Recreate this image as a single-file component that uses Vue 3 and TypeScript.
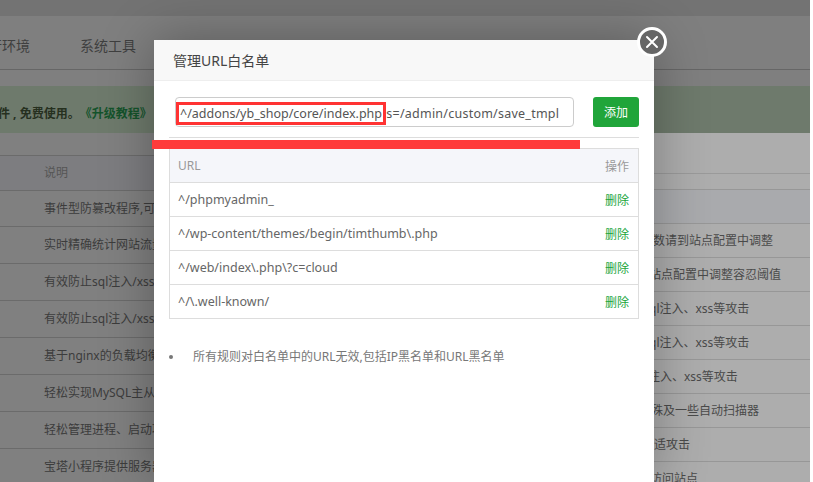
<script setup lang="ts">
const leftRows: string[] = [
  '事件型防篡改程序,可有效保护网站不被篡改',
  '实时精确统计网站流量、来源和访问情况',
  '有效防止sql注入/xss/一句话木马等常见攻击',
  '有效防止sql注入/xss/一句话木马等常见攻击',
  '基于nginx的负载均衡插件,支持多节点',
  '轻松实现MySQL主从同步备份的工具',
  '轻松管理进程、启动项和系统服务',
  '宝塔小程序提供服务器管理的便捷入口',
]
const rightRows: { text: string; inset: number }[] = [
  { text: '数请到站点配置中调整', inset: 153 },
  { text: '站点配置中调整容忍阈值', inset: 149 },
  { text: 'ql注入、xss等攻击', inset: 149 },
  { text: 'ql注入、xss等攻击', inset: 149 },
  { text: '注入、xss等攻击', inset: 148 },
  { text: '殊及一些自动扫描器', inset: 151 },
  { text: '适攻击', inset: 154 },
  { text: '访问站点', inset: 150 },
]
const urls: string[] = [
  '^/phpmyadmin_',
  '^/wp-content/themes/begin/timthumb\\.php',
  '^/web/index\\.php\\?c=cloud',
  '^/\\.well-known/',
]
</script>

<template>
  <div class="page">
    <div class="topstrip"></div>
    <nav class="nav">
      <span class="nav-first">运行环境</span>
      <span>系统工具</span>
    </nav>
    <div class="banner">
      <span class="banner-text">件 , 免费使用。</span><span class="banner-link">《升级教程》</span>
    </div>
    <div class="body">
      <section class="left">
        <div class="left-head">说明</div>
        <div v-for="(row, i) in leftRows" :key="i" class="left-row">{{ row }}</div>
      </section>
      <section class="right">
        <div class="right-gap"></div>
        <div class="right-gap2"></div>
        <div class="right-head"></div>
        <div
          v-for="(row, i) in rightRows"
          :key="i"
          class="right-row"
          :style="{ paddingLeft: row.inset + 'px' }"
        >{{ row.text }}</div>
      </section>
    </div>

    <div class="modal">
      <header class="modal-title">管理URL白名单</header>
      <div class="modal-body">
        <div class="form">
          <div class="url-input">^/addons/yb_shop/core/index.php <span class="url-rest">s=/admin/custom/save_tmpl</span></div>
          <button class="add">添加</button>
        </div>
        <div class="divider"></div>
        <table class="rules">
          <thead>
            <tr><th>URL</th><th class="op">操作</th></tr>
          </thead>
          <tbody>
            <tr v-for="u in urls" :key="u">
              <td>{{ u }}</td>
              <td class="op"><a class="del">删除</a></td>
            </tr>
          </tbody>
        </table>
        <ul class="notes">
          <li>所有规则对白名单中的URL无效,包括IP黑名单和URL黑名单</li>
        </ul>
      </div>
    </div>

    <button class="close" aria-label="关闭">
      <svg width="14" height="14" viewBox="0 0 14 14">
        <path d="M2 2 L12 12 M12 2 L2 12" stroke="#fff" stroke-width="2" stroke-linecap="round" fill="none" />
      </svg>
    </button>
    <div class="mark-box"></div>
    <div class="mark-bar"></div>
  </div>
</template>

<style>
html, body { margin: 0; padding: 0; background: #fff; overflow: hidden; }
</style>

<style scoped>
.page {
  position: relative;
  width: 813px;
  height: 482px;
  overflow: hidden;
  background: #fff;
  font-family: "Noto Sans", "Noto Sans CJK SC", sans-serif;
  font-size: 12px;
  color: #3f3f3f;
}
.topstrip { width: 810px; height: 16px; background: #737373; }
.nav {
  width: 810px;
  height: 54px;
  box-sizing: border-box;
  padding-top: 4px;
  background: #7f7f7f;
  border-bottom: 1px solid #666;
  display: flex;
  align-items: center;
  gap: 50px;
  font-size: 14px;
  overflow: hidden;
}
.nav-first { margin-left: -26px; }
.banner {
  width: 810px;
  height: 63px;
  box-sizing: border-box;
  padding: 22px 0 0;
  display: flex;
  align-items: center;
  white-space: nowrap;
  overflow: hidden;
  background: linear-gradient(#7f7f7f 16px, #6e7a6c 16px);
  color: #26301f;
  font-weight: 700;
}
.banner-text { margin-left: -2px; }
.banner-link { color: #14532b; }
.body { width: 810px; display: flex; }
.left { width: 500px; flex: none; background: #808080; padding-top: 22px; overflow: hidden; }
.left-head {
  height: 34px;
  line-height: 34px;
  padding-left: 44px;
  color: #555;
  border-top: 1px solid #6b6b6b;
  background: #7d7d80;
}
.left-row {
  height: 36px;
  line-height: 36px;
  padding-left: 44px;
  border-top: 1px solid #6b6b6b;
  white-space: nowrap;
  overflow: hidden;
  color: #3c3c3c;
}
.left-head + .left-row { height: 35px; line-height: 35px; }
.right { width: 310px; flex: none; background: #adadad; overflow: hidden; }
.right-gap { height: 40px; border-bottom: 1px solid #9a9a9a; }
.right-gap2 { height: 15px; border-bottom: 1px solid #979797; }
.right-head { height: 33px; background: #a9aaad; border-bottom: 1px solid #979797; }
.right-row {
  height: 32px;
  padding-top: 1px;
  line-height: 32px;
  border-bottom: 1px solid #979797;
  white-space: nowrap;
  color: #4a4a4a;
}
.modal {
  position: absolute;
  left: 154px;
  top: 40px;
  width: 500px;
  height: 442px;
  background: #fff;
  box-shadow: 0 0 50px rgba(0, 0, 0, 0.3);
  color: #666;
}
.modal-title {
  height: 41px;
  box-sizing: border-box;
  line-height: 41px;
  padding-left: 19px;
  background: #f8f8f8;
  border-bottom: 1px solid #eee;
  font-size: 14px;
  color: #444;
}
.modal-body { padding: 16px 15px 0; }
.form { display: flex; align-items: flex-start; padding-left: 6px; }
.url-input {
  width: 399px;
  height: 30px;
  box-sizing: border-box;
  border: 1px solid #ccc;
  border-radius: 4px;
  line-height: 28px;
  padding: 2px 0 0 4px;
  font-size: 12.5px;
  color: #555;
  white-space: nowrap;
  overflow: hidden;
}
.url-rest { letter-spacing: 0.24px; margin-left: 1px; }
.add {
  margin-left: 19px;
  width: 46px;
  height: 30px;
  border: 0;
  border-radius: 3px;
  background: #20a53a;
  color: #fff;
  font: inherit;
  font-size: 12px;
  padding: 0;
}
.divider { height: 1px; background: #ddd; margin-top: 10px; }
.rules {
  margin-top: 10px;
  width: 470px;
  border-collapse: collapse;
  font-size: 12.5px;
}
.rules th, .rules td {
  height: 34px;
  box-sizing: border-box;
  padding: 0 8px;
  border-top: 1px solid #ddd;
  border-bottom: 1px solid #ddd;
  text-align: left;
  font-weight: 400;
}
.rules th:first-child, .rules td:first-child { border-left: 1px solid #ddd; }
.rules th:last-child, .rules td:last-child { border-right: 1px solid #ddd; }
.rules th { background: #f5f6fa; color: #999; font-size: 12px; }
.rules .op { text-align: right; font-size: 12px; padding-right: 9px; }
.del { color: #20a53a; }
.notes { margin: 29px 0 0; padding: 0 0 0 24px; color: #777; list-style: none; position: relative; line-height: 18px; }
.notes li::before {
  content: "";
  position: absolute;
  left: 0;
  top: 7px;
  width: 4px;
  height: 4px;
  border-radius: 50%;
  background: #777;
}
.close {
  position: absolute;
  left: 637px;
  top: 27px;
  width: 30px;
  height: 30px;
  box-sizing: border-box;
  border: 3px solid #fff;
  border-radius: 50%;
  background: #666;
  padding: 0;
  display: flex;
  align-items: center;
  justify-content: center;
}
.mark-box {
  position: absolute;
  left: 176px;
  top: 102px;
  width: 210px;
  height: 23px;
  box-sizing: border-box;
  border: 3px solid #f33;
}
.mark-bar {
  position: absolute;
  left: 152px;
  top: 140px;
  width: 428px;
  height: 9px;
  background: #ff3b3b;
}
</style>
